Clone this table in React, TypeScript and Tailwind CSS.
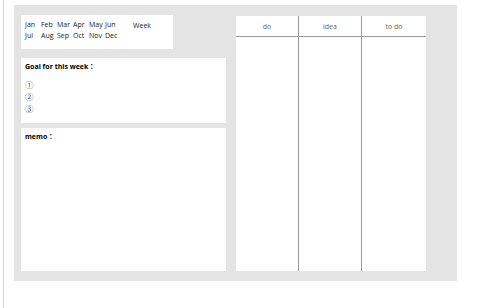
const months = [
  ["Jan", "Feb", "Mar", "Apr", "May", "Jun"],
  ["Jul", "Aug", "Sep", "Oct", "Nov", "Dec"],
];

export default function App() {
  return (
    <main
      className="flex h-[308px] w-[480px] bg-white text-[#333]"
      style={{ fontFamily: '"Open Sans", "Noto Sans", "Noto Sans CJK JP", sans-serif' }}
    >
      <div className="ml-[3px] h-full border-l border-[#d4d4d4]" />
      <div className="ml-[10px] mt-[5px] flex h-[276px] w-[443px] items-start gap-[10px] bg-[#e4e4e4] pl-[7px]">
        <div className="flex flex-col pt-[10px]">
          <MonthBox />
          <section className="mt-[9px] h-[65px] w-[205px] bg-white px-[4px] pt-[4px]">
            <p className="text-[7px] font-bold text-black">Goal for this week：</p>
            <ul className="mt-[6px] flex flex-col text-[8.5px] leading-[12px] text-[#555]">
              <li>①</li>
              <li>②</li>
              <li>③</li>
            </ul>
          </section>
          <section className="mt-[5px] h-[143px] w-[205px] bg-white px-[4px] pt-[4px]">
            <p className="text-[7px] font-bold text-black">memo：</p>
          </section>
        </div>
        <Board />
      </div>
    </main>
  );
}

function MonthBox() {
  return (
    <section className="flex h-[34px] w-[152px] items-start bg-white pl-[4px] pt-[5px] text-[7px] text-[#222]">
      <div className="flex flex-col gap-[1px]">
        {months.map((row, i) => (
          <div key={i} className="flex h-[10px] items-center">
            {row.map((m) => (
              <span key={m} className="w-[16px]">
                {m}
              </span>
            ))}
          </div>
        ))}
      </div>
      <span className="ml-[12px] mt-[1px]">Week</span>
    </section>
  );
}

function Board() {
  const cols = ["do", "idea", "to do"];
  return (
    <section className="mt-[11px] flex h-[255px] w-[190px] bg-white text-[7px] text-[#666]">
      {cols.map((c, i) => (
        <div
          key={c}
          className={`flex flex-col ${i < 2 ? "w-[63px] border-r border-[#9a9a9a]" : "flex-1"}`}
        >
          <div className="flex h-[21px] items-center justify-center border-b border-[#9a9a9a] pt-[2px]">{c}</div>
          <div className="flex-1" />
        </div>
      ))}
    </section>
  );
}
